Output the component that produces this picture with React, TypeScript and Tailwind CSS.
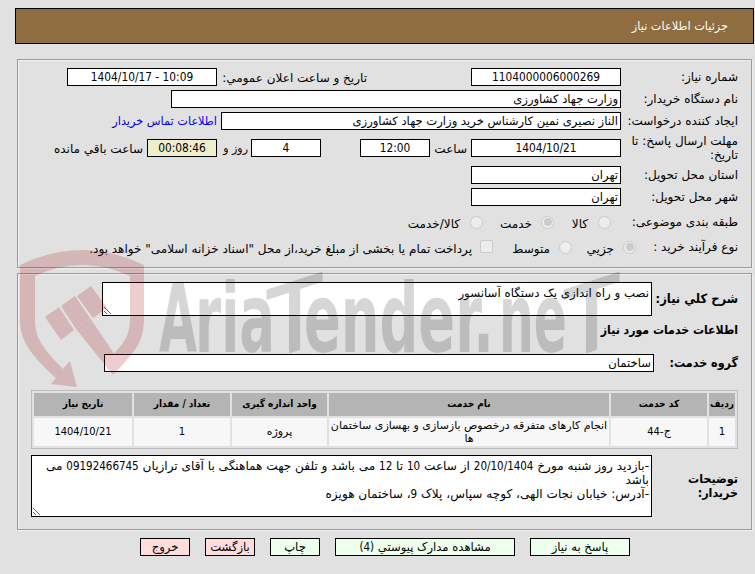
import type { ReactNode } from 'react';
import clsx from 'clsx';

const services = [
  { row: '1', code: '44', name: 'انجام کارهای متفرقه درخصوص بازسازی و بهسازی ساختمان ها', unit: 'پروژه', qty: '1', date: '1404/10/21' },
];

const condensed = "font-['DejaVu_Sans_Condensed','DejaVu_Sans',sans-serif] [font-stretch:75%]";

function Num({ className, children }: { className?: string; children: ReactNode }) {
  return <span className={clsx(condensed, className || 'text-[11.5px]')}>{children}</span>;
}

function Box({ className, children }: { className?: string; children?: ReactNode }) {
  return (
    <div className={clsx('h-[18px] shrink-0 border border-black px-[2px] text-[11.6px] leading-[17px] whitespace-nowrap', className)}>
      {children}
    </div>
  );
}

function NumBox({ className, children }: { className?: string; children?: ReactNode }) {
  return (
    <div dir="ltr" className={clsx('h-[18px] shrink-0 border border-black text-center text-[11.8px] leading-[16px]', condensed, className)}>
      {children}
    </div>
  );
}

function Row({ label, className, children }: { label: string; className?: string; children: ReactNode }) {
  return (
    <div className={clsx('flex items-center', className)}>
      <div className="w-[117px] shrink-0 leading-[14px]">{label}</div>
      {children}
    </div>
  );
}

function Radio({ checked }: { checked?: boolean }) {
  return (
    <span className="flex size-[13px] shrink-0 items-center justify-center rounded-full border border-[#cbcbcb] bg-[#ededed]">
      {checked && <span className="size-[8px] rounded-full bg-[#cbcbcb]" />}
    </span>
  );
}

function Panel({ className, children }: { className?: string; children: ReactNode }) {
  return (
    <section className={clsx('ml-[17px] mr-[3px] border border-[#9a9a9a] shadow-[1px_1px_0_#f0f0f0,inset_1px_1px_0_#f0f0f0]', className)}>
      {children}
    </section>
  );
}

function Grip() {
  return (
    <svg className="absolute bottom-0 left-0" width="10" height="10" viewBox="0 0 10 10" stroke="#555" fill="none">
      <path d="M1 2l7 7M1 6l3 3" strokeWidth="0.9" />
    </svg>
  );
}

// Shield and wordmark laid over the whole form
function Watermark() {
  return (
    <svg className="pointer-events-none absolute left-0 top-0" width="755" height="574" viewBox="0 0 755 574">
      <g fill="#a50f14" opacity="0.2">
        <path d="M20 265Q82 235 144 265V317Q144 334 138 345Q133 354 113 375L76 329L90 318L114 353.500Q122 345 126 338Q130 331 130 317V276Q82 254 35 276V320Q35 334 41 343Q46 352 63 369L70 361L77 387L51 384L56 378Q32 357 25 342Q20 332 20 320Z" />
        <path d="M45 317L59 307L74 330L61 340ZM77 296L91 286L107 308L93 318ZM61 306L75 296L90 318L76 329Z" />
      </g>
      <g opacity="0.155" className={condensed} fontWeight="bold" direction="ltr">
        <text x="159" y="352" fontSize="94" textLength="38" lengthAdjust="spacingAndGlyphs">A</text>
        <text x="195" y="352" fontSize="97" textLength="80" lengthAdjust="spacingAndGlyphs">ria</text>
        <text transform="translate(268 359) skewY(-18)" fontSize="94" fontWeight="normal" stroke="#000" strokeWidth="2.5" textLength="53" lengthAdjust="spacingAndGlyphs">T</text>
        <text x="304" y="352" fontSize="97" textLength="190" lengthAdjust="spacingAndGlyphs">ender.</text>
        <text x="499" y="352" fontSize="97" textLength="68" lengthAdjust="spacingAndGlyphs">ne</text>
        <text transform="translate(565 359) skewY(-18)" fontSize="94" fontWeight="normal" stroke="#000" strokeWidth="2.5" textLength="53" lengthAdjust="spacingAndGlyphs">T</text>
      </g>
    </svg>
  );
}

const th = 'h-[23px] bg-[#b4b4b4] p-0 text-[10px] leading-[14px] font-bold';
const td = 'h-[28px] bg-[#f7f7f7] p-0 text-[11px] leading-[13px]';

export default function App() {
  return (
    <div dir="rtl" className="relative h-[574px] w-[755px] overflow-hidden bg-[#e1e1e1] pt-2 font-['DejaVu_Sans',sans-serif] text-[12px] text-black">
      <header className="mr-px ml-[15px] flex h-9 items-center border border-black bg-[#8f6d40] pt-[3px] pr-[25px] text-[11.3px] text-white">
        جزئیات اطلاعات نیاز
      </header>

      <Panel className="mt-[15px] h-[209px] pt-2 pr-[13px]">
        <Row label="شماره نیاز:" className="h-[18px]">
          <NumBox className="w-[150px] bg-white">1104000006000269</NumBox>
          <span className="mr-[104px] w-[150px] pt-0.5 whitespace-nowrap">تاریخ و ساعت اعلان عمومي:</span>
          <NumBox className="w-[150px] bg-white">1404/10/17 - 10:09</NumBox>
        </Row>
        <Row label="نام دستگاه خریدار:" className="mt-1 h-[18px]">
          <Box className="w-[450px] bg-white">وزارت جهاد کشاورزی</Box>
        </Row>
        <Row label="ایجاد کننده درخواست:" className="mt-1 h-[18px]">
          <Box className="w-[400px] bg-white">الناز نصیری نمین کارشناس خرید وزارت جهاد کشاورزی</Box>
          <a className="mr-1 pt-0.5 text-[11.3px] whitespace-nowrap text-[#0000ee]">اطلاعات تماس خریدار</a>
        </Row>
        <Row label="مهلت ارسال پاسخ: تا تاریخ:" className="mt-1 h-7">
          <NumBox className="w-[150px] bg-white">1404/10/21</NumBox>
          <span className="mr-1 w-[37px] pt-0.5">ساعت</span>
          <NumBox className="w-[70px] bg-white">12:00</NumBox>
          <NumBox className="mr-[39px] w-[70px] bg-white">4</NumBox>
          <span className="mr-[3px] w-[31px] pt-0.5 text-[11px] whitespace-nowrap">روز و</span>
          <NumBox className="w-[70px] bg-[#eeeecc]">00:08:46</NumBox>
          <span className="mr-1 pt-0.5 whitespace-nowrap">ساعت باقي مانده</span>
        </Row>
        <Row label="استان محل تحویل:" className="mt-1 h-[18px]">
          <Box className="w-[150px] bg-white">تهران</Box>
        </Row>
        <Row label="شهر محل تحویل:" className="mt-1 h-[18px]">
          <Box className="w-[150px] bg-white">تهران</Box>
        </Row>
        <Row label="طبقه بندی موضوعی:" className="mt-[7px] h-[18px]">
          <span className="mr-[10px]"><Radio /></span>
          <span className="mr-[10px] w-[34px] pt-[3px]">کالا</span>
          <Radio checked />
          <span className="mr-[9px] w-[49px] pt-[3px]">خدمت</span>
          <Radio />
          <span className="mr-[10px] pt-[3px] whitespace-nowrap">کالا/خدمت</span>
        </Row>
        <div className="mt-[7px] flex h-[18px] items-center">
          <div className="w-[102px]">نوع فرآیند خرید :</div>
          <Radio checked />
          <span className="mr-[9px] w-[42px] pt-[3px]">جزیي</span>
          <Radio />
          <span className="mr-[9px] w-[57px] pt-[3px]">متوسط</span>
          <span className="mb-0.5 size-[13px] shrink-0 rounded-[2px] border border-[#cbcbcb] bg-[#ededed]" />
          <span className="mr-2 pt-[3px] whitespace-nowrap">پرداخت تمام یا بخشی از مبلغ خرید،از محل "اسناد خزانه اسلامی" خواهد بود.</span>
        </div>
      </Panel>

      <Panel className="mt-[5px] h-[257px] pt-2 pr-[13px]">
        <div className="flex items-center">
          <div className={clsx('w-[86px] shrink-0 text-[12.8px] font-bold', condensed)}>شرح کلي نیاز:</div>
          <div className="relative h-[34px] w-[550px] border border-black bg-white px-[2px] pt-[3px] text-[11.8px] leading-[14px]">
            نصب و راه اندازی یک دستگاه آسانسور
            <Grip />
          </div>
        </div>
        <div className={clsx('mt-[5px] h-[18px] text-[12.2px] leading-[18px] font-bold', condensed)}>اطلاعات خدمات مورد نیاز</div>
        <div className="mt-[15px] flex items-center">
          <div className={clsx('w-[84px] shrink-0 text-[12.4px] font-bold', condensed)}>گروه خدمت:</div>
          <Box className="w-[550px] bg-white">ساختمان</Box>
        </div>
        <table className="mt-[17px] h-[59px] w-[707px] table-fixed border-separate border-spacing-[2px] border border-[#bdbdbd] text-center">
          <thead className={condensed}>
            <tr>
              <th className={clsx(th, 'w-[26px]')}>ردیف</th>
              <th className={clsx(th, 'w-[96px]')}>کد خدمت</th>
              <th className={clsx(th, 'w-[280px]')}>نام خدمت</th>
              <th className={clsx(th, 'w-[95px]')}>واحد اندازه گیری</th>
              <th className={clsx(th, 'w-[96px]')}>تعداد / مقدار</th>
              <th className={th}>تاریخ نیاز</th>
            </tr>
          </thead>
          <tbody>
            {services.map((s) => (
              <tr key={s.row}>
                <td className={td}><Num className="text-[11.3px]">{s.row}</Num></td>
                <td className={td}>ج-<Num className="text-[11px]">{s.code}</Num></td>
                <td className={td}>{s.name}</td>
                <td className={td}>{s.unit}</td>
                <td className={td}><Num className="text-[11.3px]">{s.qty}</Num></td>
                <td className={td}><Num className="text-[11px]">{s.date}</Num></td>
              </tr>
            ))}
          </tbody>
        </table>
        <div className="mt-1.5 flex items-center">
          <div className={clsx('w-[86px] shrink-0 pl-6 text-[12.4px] leading-[14px] font-bold', condensed)}>توضیحات خریدار:</div>
          <div className="relative h-[62px] w-[621px] border border-black bg-white px-[2px] pt-[3px] text-[12.1px] leading-[14px] whitespace-nowrap">
            <p>-بازدید روز شنبه مورخ <Num>20/10/1404</Num> از ساعت <Num>10</Num> تا <Num>12</Num> می باشد و تلفن جهت هماهنگی با آقای ترازیان <Num>09192466745</Num> می</p>
            <p>باشد</p>
            <p>-آدرس: خیابان نجات الهی، کوچه سپاس، پلاک <Num>9</Num>، ساختمان هویزه</p>
            <Grip />
          </div>
        </div>
      </Panel>

      <footer className="mt-2 mr-[125px] flex gap-[15px] text-center">
        <Box className="w-[100px] bg-[#eeffee]">پاسخ به نیاز</Box>
        <Box className="w-[180px] bg-[#eeffee]">مشاهده مدارک پیوستي <Num>(4)</Num></Box>
        <Box className="w-[50px] bg-[#eeffee]">چاپ</Box>
        <Box className="w-[50px] bg-[#ffdddd]">بازگشت</Box>
        <Box className="w-[50px] bg-[#ffdddd]">خروج</Box>
      </footer>
      <Watermark />
    </div>
  );
}
